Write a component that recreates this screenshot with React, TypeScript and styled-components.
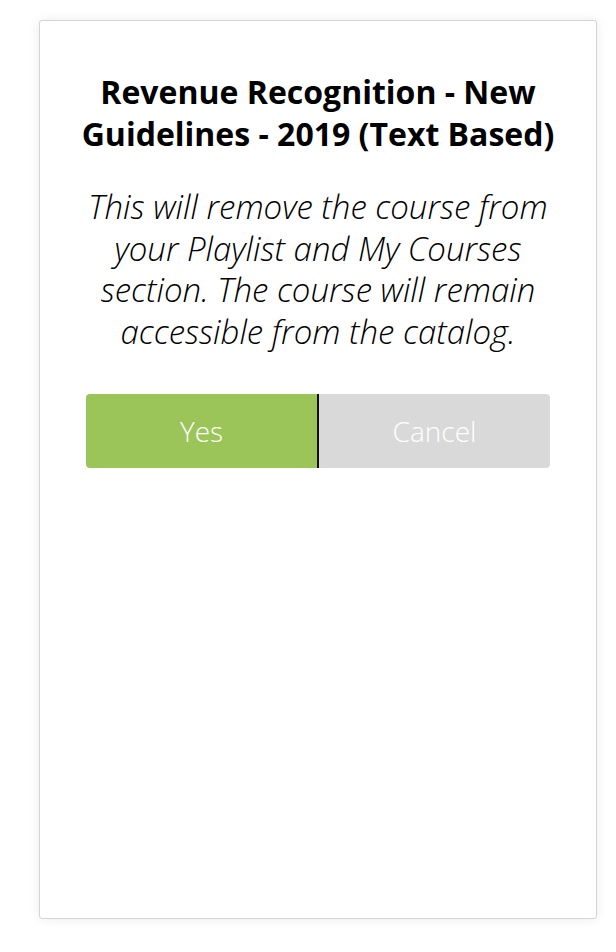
import React from 'react';
import styled, { createGlobalStyle } from 'styled-components';

const GlobalStyle = createGlobalStyle`
  html, body {
    margin: 0;
    padding: 0;
    background: #ffffff;
    font-family: "Open Sans", "Liberation Sans", sans-serif;
  }
`;

const Page = styled.div`
  padding: 20px 19px 33px 39px;
  box-sizing: border-box;
  width: 616px;
  height: 952px;
`;

const Card = styled.div`
  box-sizing: border-box;
  height: 899px;
  background: #ffffff;
  border: 1px solid #d4d4d4;
  border-radius: 3px;
  box-shadow: 0 0 12px rgba(0, 0, 0, 0.08);
  padding: 50px 46px 0 46px;
  display: flex;
  flex-direction: column;
  align-items: stretch;
`;

const Title = styled.h2`
  margin: 0 -10px;
  font-size: 32px;
  line-height: 42px;
  font-weight: 700;
  color: #000000;
  text-align: center;
`;

const Message = styled.p`
  margin: 31px -10px 0 -10px;
  font-size: 33px;
  line-height: 41.5px;
  font-weight: 300;
  font-style: italic;
  color: #000000;
  text-align: center;
`;

const Actions = styled.div`
  margin-top: 42px;
  display: flex;
  height: 74px;
  border-radius: 4px;
  overflow: hidden;
`;

const ActionButton = styled.button<{ $primary?: boolean }>`
  flex: 1;
  border: none;
  margin: 0;
  padding: 0;
  font-family: inherit;
  font-size: 28px;
  font-weight: 300;
  color: #ffffff;
  cursor: pointer;
  background: ${(p) => (p.$primary ? '#9cc559' : '#d9d9d9')};
  border-right: ${(p) => (p.$primary ? '2px solid #111111' : 'none')};
`;

const App: React.FunctionComponent = (): JSX.Element => {
    return (
        <>
            <GlobalStyle />
            <Page>
                <Card>
                    <Title>
                        Revenue Recognition - New Guidelines - 2019 (Text Based)
                    </Title>
                    <Message>
                        This will remove the course from your Playlist and My Courses section. The course will remain accessible from the catalog.
                    </Message>
                    <Actions>
                        <ActionButton $primary>Yes</ActionButton>
                        <ActionButton>Cancel</ActionButton>
                    </Actions>
                </Card>
            </Page>
        </>
    );
}

export default App;
